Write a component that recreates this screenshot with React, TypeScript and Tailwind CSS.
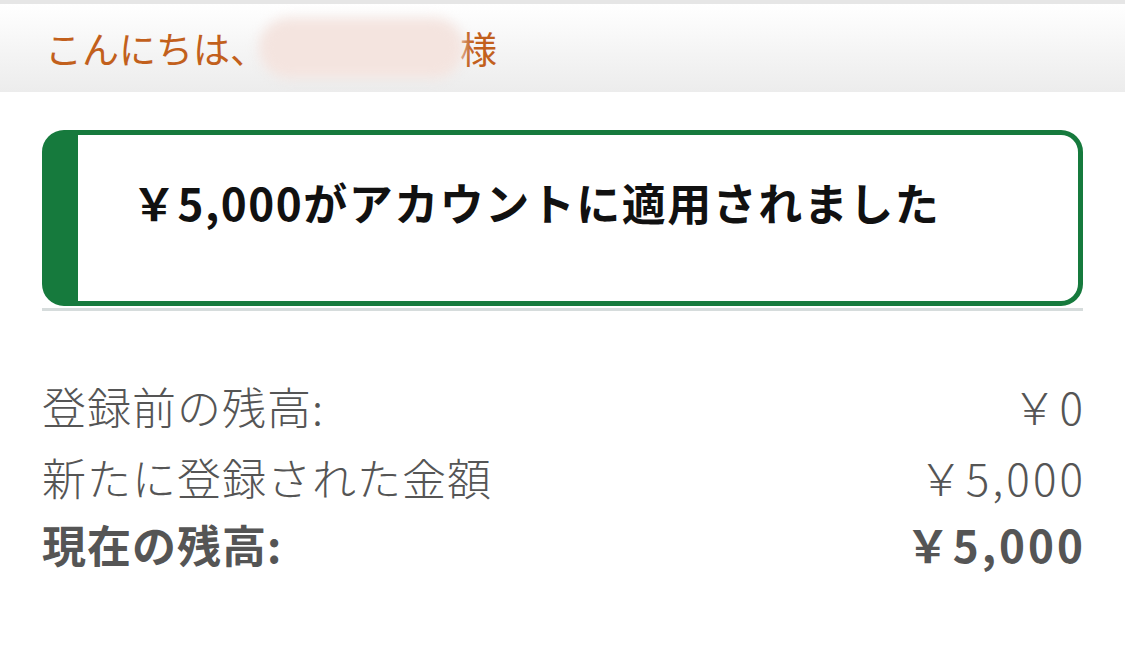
export default function App() {
  const rows = [
    { label: "登録前の残高:", value: "￥0", bold: false },
    { label: "新たに登録された金額", value: "￥5,000", bold: false },
    { label: "現在の残高:", value: "￥5,000", bold: true },
  ];

  return (
    <div
      className="w-[1125px] h-[654px] bg-white overflow-hidden"
      style={{ fontFamily: '"Noto Sans CJK JP", "Noto Sans", sans-serif' }}
    >
      {/* Greeting bar */}
      <div className="h-[92px] border-t-[4px] border-[#e6e6e6] bg-gradient-to-b from-white to-[#ececec] flex items-center pl-[45px]">
        <span className="text-[37px] text-[#c2601c] leading-none">こんにちは、</span>
        <span className="inline-block w-[205px] h-[60px] -ml-[8px] -mr-[4px] rounded-full bg-[#f4e4df] blur-[6px]" />
        <span className="text-[37px] text-[#c2601c] leading-none">様</span>
      </div>

      <div className="px-[42px] pt-[38px]">
        {/* Success alert */}
        <div className="h-[176px] rounded-[22px] border-[5px] border-l-[36px] border-[#167a3d] pl-[54px] pt-[38px]">
          <p className="text-[44px] font-bold text-[#111] leading-[58px] tracking-[1.5px]">
            ￥5,000がアカウントに適用されました
          </p>
        </div>
        <div className="h-[3px] mt-[2px] bg-[#d6dcdc]" />

        {/* Balance summary */}
        <div className="mt-[59px] text-[#555]">
          {rows.map((row) => (
            <div
              key={row.label}
              className={`flex justify-between items-center ${
                row.bold ? "h-[64px] font-bold" : "h-[71px] font-light"
              } text-[44px]`}
            >
              <span className="tracking-[1px]">{row.label}</span>
              <span className="tracking-[3px] -mr-[3px]">{row.value}</span>
            </div>
          ))}
        </div>
      </div>
    </div>
  );
}
